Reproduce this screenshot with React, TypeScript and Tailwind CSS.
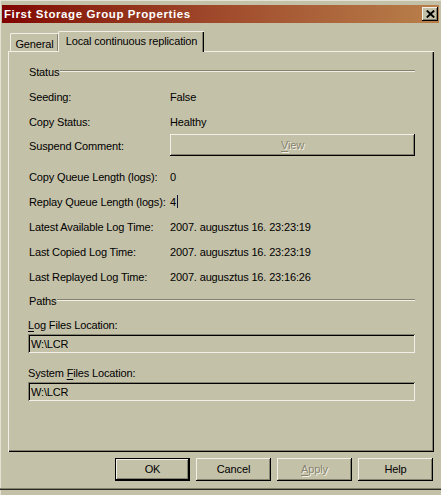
import React from "react";

const FACE = "bg-[#c4c1a9]";

function WinButton({
  children,
  isDefault,
  disabled,
}: {
  children: React.ReactNode;
  isDefault?: boolean;
  disabled?: boolean;
}) {
  return (
    <div
      className={
        "w-[75px] h-[23px] flex items-center justify-center bg-[#c4c1a9] " +
        (isDefault
          ? "border border-black shadow-[inset_-1px_-1px_0_#000,inset_1px_1px_0_#f2f0e6,inset_-2px_-2px_0_#858270]"
          : "shadow-[inset_-1px_-1px_0_#000,inset_1px_1px_0_#f2f0e6,inset_-2px_-2px_0_#858270]") +
        (disabled ? " text-[#878470] [text-shadow:1px_1px_0_#f2f0e6]" : " text-black")
      }
    >
      {children}
    </div>
  );
}

function GroupHeader({ label }: { label: string }) {
  return (
    <div className="h-[14px] flex items-center">
      <span className="leading-[14px]">{label}</span>
      <div className="flex-1 ml-[1px] h-[2px] border-t border-b border-t-[#858270] border-b-[#f2f0e6] -mt-[2px]" />
    </div>
  );
}

function Row({ label, children }: { label: string; children: React.ReactNode }) {
  return (
    <div className="h-[25px] grid grid-cols-[141px_1fr] items-center">
      <span className="leading-[14px]">{label}</span>
      <div className="leading-[14px] flex items-center">{children}</div>
    </div>
  );
}

function TextBox({ value }: { value: string }) {
  return (
    <div className="h-[19px] flex items-center pl-[3px] bg-[#c4c1a9] shadow-[inset_1px_1px_0_#858270,inset_-1px_-1px_0_#f2f0e6,inset_2px_2px_0_#000,inset_-2px_-2px_0_#c4c1a9]">
      <span className="leading-[14px] pt-[1px]">{value}</span>
    </div>
  );
}

export default function App() {
  return (
    <div
      className={
        "w-[441px] h-[495px] overflow-hidden flex flex-col text-[11px] tracking-[-0.15px] text-black font-['Liberation_Sans',Arial,sans-serif] shadow-[inset_1px_1px_0_#e4e2d4] " +
        FACE
      }
    >
      {/* Title bar */}
      <div className="mt-[5px] ml-[2px] mr-[2px] h-[18px] flex items-center justify-between pl-[2px] pr-[1px] bg-gradient-to-r from-[#800000] via-[#a04a2c] to-[#b8804b]">
        <span className="text-white font-bold text-[11.5px] tracking-[0.6px] leading-[14px]">
          First Storage Group Properties
        </span>
        <div className="w-[16px] h-[14px] flex items-center justify-center bg-[#c4c1a9] shadow-[inset_-1px_-1px_0_#000,inset_1px_1px_0_#f2f0e6,inset_-2px_-2px_0_#858270]">
          <svg width="9" height="8" viewBox="0 0 9 8" className="-mt-[1px]">
            <path d="M0.8 0.6 L8.2 7.4 M8.2 0.6 L0.8 7.4" stroke="#000" strokeWidth="2" />
          </svg>
        </div>
      </div>

      {/* Body */}
      <div className="ml-[8px] w-[426px] flex flex-col">
        {/* Tabs */}
        <div className="mt-[8px] h-[20px] flex items-end pl-[2px]">
          <div className="w-[48px] h-[18px] flex items-center justify-center border-l border-t border-[#f2f0e6] rounded-tl-[2px] shadow-[inset_-1px_0_0_#858270]">
            <span className="leading-[14px] pt-[2px]">General</span>
          </div>
          <div className="relative z-10 -mb-[1px] w-[146px] h-[21px] flex items-center justify-center pb-[2px] bg-[#c4c1a9] border-l border-t border-[#f2f0e6] rounded-tl-[2px] shadow-[inset_-1px_0_0_#000,inset_-2px_0_0_#858270]">
            <span className="leading-[14px]">Local continuous replication</span>
          </div>
        </div>

        {/* Panel */}
        <div className="h-[401px] border-l border-t border-[#f2f0e6] shadow-[inset_-1px_-1px_0_#000,inset_-2px_-2px_0_#858270] pt-[13px] pl-[20px] pr-[19px] flex flex-col">
          <GroupHeader label="Status" />
          <div className="mt-[5px] flex flex-col">
            <Row label="Seeding:">False</Row>
            <Row label="Copy Status:">Healthy</Row>
            <div className="h-[22px] grid grid-cols-[141px_1fr] items-center">
              <span className="leading-[14px] pt-[2px]">Suspend Comment:</span>
              <div className="h-[22px] flex items-center justify-center bg-[#c4c1a9] text-[#878470] [text-shadow:1px_1px_0_#f2f0e6] shadow-[inset_-1px_-1px_0_#000,inset_1px_1px_0_#f2f0e6,inset_-2px_-2px_0_#858270]">
                <span className="leading-[14px]">
                  <span className="underline underline-offset-[2px]">V</span>iew
                </span>
              </div>
            </div>
            <div className="mt-[8px] flex flex-col">
              <Row label="Copy Queue Length (logs):">0</Row>
              <Row label="Replay Queue Length (logs):">
                <span>4</span>
                <span className="ml-[1px] w-[1px] h-[13px] bg-[#101030]" />
              </Row>
              <Row label="Latest Available Log Time:">2007. augusztus 16. 23:23:19</Row>
              <Row label="Last Copied Log Time:">2007. augusztus 16. 23:23:19</Row>
              <Row label="Last Replayed Log Time:">2007. augusztus 16. 23:16:26</Row>
            </div>
          </div>

          <div className="mt-[5px]">
            <GroupHeader label="Paths" />
          </div>
          <div className="mt-[10px] h-[14px] leading-[14px] -ml-[1px]">
            <span className="underline underline-offset-[2px]">L</span>og Files Location:
          </div>
          <div className="mt-[2px] -ml-[1px]">
            <TextBox value={"W:\\LCR"} />
          </div>
          <div className="mt-[13px] h-[14px] leading-[14px] -ml-[1px]">
            System <span className="underline underline-offset-[2px]">F</span>iles Location:
          </div>
          <div className="mt-[2px] -ml-[1px]">
            <TextBox value={"W:\\LCR"} />
          </div>
        </div>

        {/* Buttons */}
        <div className="mt-[6px] h-[23px] flex justify-end gap-[6px] pr-[1px]">
          <WinButton isDefault>OK</WinButton>
          <WinButton>Cancel</WinButton>
          <WinButton disabled>
            <span>
              <span className="underline underline-offset-[2px]">A</span>pply
            </span>
          </WinButton>
          <WinButton>Help</WinButton>
        </div>
      </div>

      {/* Bottom frame */}
      <div className="mt-[7px] h-[1px] bg-[#858270]" />
      <div className="h-[1px] bg-[#2a2a22]" />
    </div>
  );
}
